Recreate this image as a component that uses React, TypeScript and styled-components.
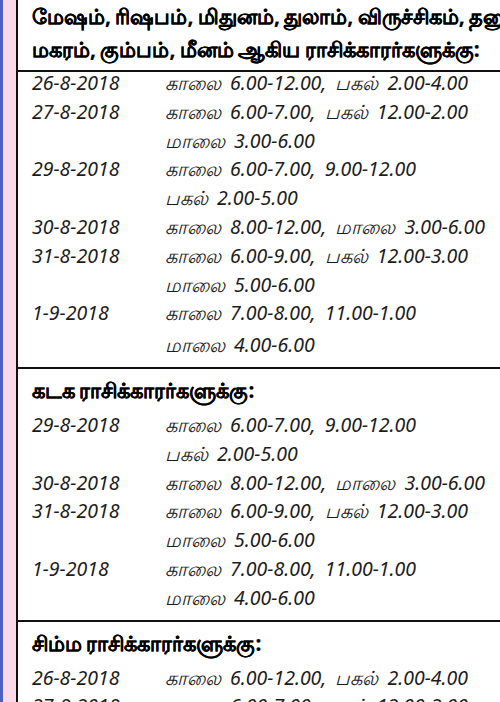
import React from 'react'
import styled, { createGlobalStyle } from 'styled-components'

const GlobalStyle = createGlobalStyle`
  html, body {
    margin: 0;
    padding: 0;
    background: #ffffff;
    overflow: hidden;
  }
`

const Page = styled.div`
  display: flex;
  width: 500px;
  height: 702px;
  overflow: hidden;
  background: #ffffff;
`

const BlueStrip = styled.div`
  flex: 0 0 3px;
  background: #4f5fc2;
`

const PinkStrip = styled.div`
  flex: 0 0 13px;
  background: #fbd9e8;
`

const Table = styled.div`
  flex: 0 0 580px;
  border-left: 2px solid #111;
  display: flex;
  flex-direction: column;
`

const Section = styled.div<{ $pb?: number }>`
  border-bottom: 2px solid #111;
  padding-bottom: ${({ $pb }) => $pb ?? 7}px;
`

const Heading = styled.div<{ $lh?: number }>`
  font-family: 'Noto Sans', 'Liberation Sans', sans-serif;
  font-weight: 700;
  font-size: 21px;
  line-height: ${({ $lh }) => $lh ?? 33}px;
  color: #000;
  -webkit-text-stroke: 0.2px #000;
  word-spacing: -1px;
  padding-left: 14px;
  white-space: nowrap;
`

const RowGroup = styled.div<{ $shift?: number }>`
  margin-top: ${({ $shift }) => $shift ?? 0}px;
`

const Row = styled.div<{ $gap?: number }>`
  display: grid;
  grid-template-columns: 133px 1fr;
  padding-left: 14px;
  margin-top: ${({ $gap }) => $gap ?? 0}px;
  font-family: 'Noto Sans', 'Liberation Sans', sans-serif;
  font-style: italic;
  font-size: 19.5px;
  line-height: 28.8px;
  color: #1c1c1c;
  white-space: nowrap;
`

const DateCell = styled.span``

const TimeCell = styled.span`
  word-spacing: 4px;
`

type Slot = [string, string, number?]

const sectionOne: Slot[] = [
  ['26-8-2018', 'காலை 6.00-12.00, பகல் 2.00-4.00'],
  ['27-8-2018', 'காலை 6.00-7.00, பகல் 12.00-2.00'],
  ['', 'மாலை 3.00-6.00'],
  ['29-8-2018', 'காலை 6.00-7.00, 9.00-12.00'],
  ['', 'பகல் 2.00-5.00'],
  ['30-8-2018', 'காலை 8.00-12.00, மாலை 3.00-6.00'],
  ['31-8-2018', 'காலை 6.00-9.00, பகல் 12.00-3.00'],
  ['', 'மாலை 5.00-6.00'],
  ['1-9-2018', 'காலை 7.00-8.00, 11.00-1.00'],
  ['', 'மாலை 4.00-6.00', 3],
]

const sectionTwo: Slot[] = [
  ['29-8-2018', 'காலை 6.00-7.00, 9.00-12.00'],
  ['', 'பகல் 2.00-5.00'],
  ['30-8-2018', 'காலை 8.00-12.00, மாலை 3.00-6.00'],
  ['31-8-2018', 'காலை 6.00-9.00, பகல் 12.00-3.00'],
  ['', 'மாலை 5.00-6.00'],
  ['1-9-2018', 'காலை 7.00-8.00, 11.00-1.00'],
  ['', 'மாலை 4.00-6.00'],
]

const sectionThree: Slot[] = [
  ['26-8-2018', 'காலை 6.00-12.00, பகல் 2.00-4.00'],
  ['27-8-2018', 'காலை 6.00-7.00, பகல் 12.00-2.00'],
]

function Rows({ items, shift }: { items: Slot[]; shift?: number }) {
  return (
    <RowGroup $shift={shift}>
      {items.map(([date, time, gap], i) => (
        <Row key={i} $gap={gap}>
          <DateCell>{date}</DateCell>
          <TimeCell>{time}</TimeCell>
        </Row>
      ))}
    </RowGroup>
  )
}

export default function App() {
  return (
    <Page>
      <GlobalStyle />
      <BlueStrip />
      <PinkStrip />
      <Table>
        <Section $pb={4}>
          <Heading>மேஷம், ரிஷபம், மிதுனம், துலாம், விருச்சிகம், தனுசு,</Heading>
          <Heading>மகரம், கும்பம், மீனம் ஆகிய ராசிக்காரர்களுக்கு:</Heading>
        </Section>
        <Section $pb={7}>
          <Rows items={sectionOne} shift={-3} />
        </Section>
        <Section>
          <Heading $lh={42}>கடக ராசிக்காரர்களுக்கு:</Heading>
          <Rows items={sectionTwo} />
        </Section>
        <Section>
          <Heading $lh={42}>சிம்ம ராசிக்காரர்களுக்கு:</Heading>
          <Rows items={sectionThree} />
        </Section>
      </Table>
    </Page>
  )
}
